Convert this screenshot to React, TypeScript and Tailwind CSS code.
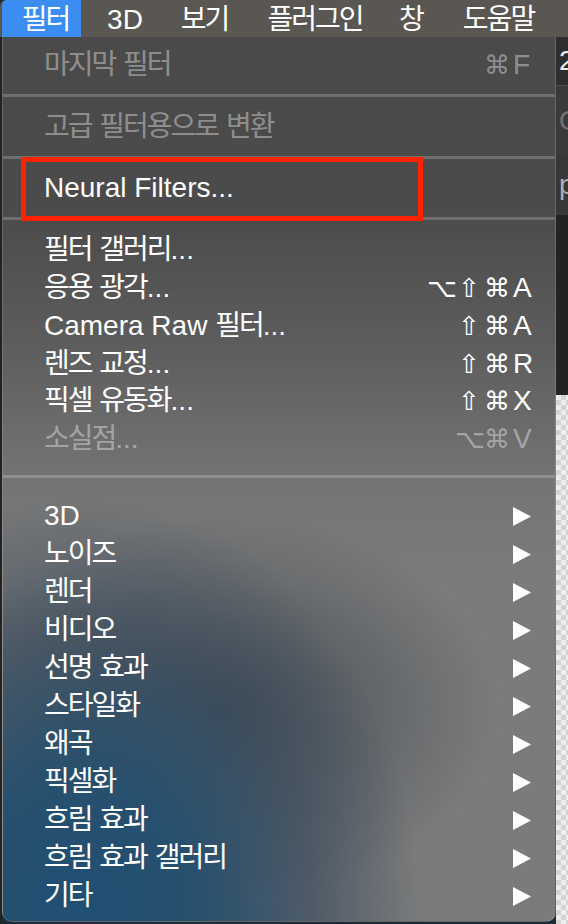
import React from "react";

type Item = {
  label: string;
  mods?: string[];
  keyChar?: string;
  disabled?: boolean;
  submenu?: boolean;
  marked?: boolean;
};

const FONT = "font-['Liberation_Sans','Noto_Sans_CJK_KR',sans-serif]";

const topItems: Item[] = [{ label: "마지막 필터", mods: ["⌘"], keyChar: "F", disabled: true }];
const convertItems: Item[] = [{ label: "고급 필터용으로 변환", disabled: true }];
const neuralItems: Item[] = [{ label: "Neural Filters...", marked: true }];
const filterItems: Item[] = [
  { label: "필터 갤러리..." },
  { label: "응용 광각...", mods: ["⌥", "⇧", "⌘"], keyChar: "A" },
  { label: "Camera Raw 필터...", mods: ["⇧", "⌘"], keyChar: "A" },
  { label: "렌즈 교정...", mods: ["⇧", "⌘"], keyChar: "R" },
  { label: "픽셀 유동화...", mods: ["⇧", "⌘"], keyChar: "X" },
  { label: "소실점...", mods: ["⌥", "⌘"], keyChar: "V", disabled: true },
];
const subItems: Item[] = [
  "3D",
  "노이즈",
  "렌더",
  "비디오",
  "선명 효과",
  "스타일화",
  "왜곡",
  "픽셀화",
  "흐림 효과",
  "흐림 효과 갤러리",
  "기타",
].map((label) => ({ label, submenu: true }));

const menuBar = [
  { label: "필터", w: "w-[79px]", active: true },
  { label: "3D", w: "w-[88px]" },
  { label: "보기", w: "w-[71px]" },
  { label: "플러그인", w: "w-[150px]" },
  { label: "창", w: "w-[42px]" },
  { label: "도움말", w: "w-[133px]" },
];

// Noto's hangul is a bit wider than the mac system font, tighten only those runs
const Label = ({ text }: { text: string }) => (
  <>
    {text.split(/([\uAC00-\uD7A3]+)/).map((part, i) =>
      /[\uAC00-\uD7A3]/.test(part) ? (
        <span key={i} className="tracking-[-2px]">
          {part}
        </span>
      ) : (
        <span key={i}>{part}</span>
      )
    )}
  </>
);

const SubArrow = () => (
  <svg width="18" height="19" viewBox="0 0 18 19" className="block">
    <path d="M0 0 L18 9.5 L0 19 Z" fill="currentColor" />
  </svg>
);

const Row = ({ item, tall }: { item: Item; tall?: boolean }) => (
  <div
    className={`relative flex items-center pl-[41px] pr-[22px] pt-[4px] ${tall ? "h-[38px]" : "h-[37.8px]"} ${
      item.disabled ? "text-white/40" : "text-white"
    }`}
  >
    <span className="flex-1 whitespace-nowrap text-[28px] leading-none">
      <Label text={item.label} />
    </span>
    {item.keyChar && (
      <div className="flex items-center">
        {item.mods?.map((m, i) => (
          <span
            key={i}
            className="w-[28px] text-center font-['DejaVu_Sans',sans-serif] text-[26px] leading-none"
          >
            {m}
          </span>
        ))}
        <span className="ml-[2px] w-[20px] text-[28px] leading-none">{item.keyChar}</span>
      </div>
    )}
    {item.submenu && (
      <span className="mr-[2px]">
        <SubArrow />
      </span>
    )}
    {item.marked && (
      <div className="pointer-events-none absolute left-[18px] top-[-11px] h-[64px] w-[402px] border-[5px] border-[#ff2200]" />
    )}
  </div>
);

const Separator = ({ big }: { big?: boolean }) => (
  <div className={big ? "pt-[19px] pb-[17px]" : "pt-[12px] pb-[9px]"}>
    <div className="h-[3px] bg-white/20" />
  </div>
);

export default function App() {
  return (
    <div className={`${FONT} flex h-[924px] w-[568px] flex-col overflow-hidden bg-[#1d2a38]`}>
      {/* menu bar */}
      <div className="flex h-[37px] shrink-0 items-center rounded-tl-[6px] bg-[#5a5752] pl-[2px]">
        {menuBar.map((m) => (
          <div
            key={m.label}
            className={`flex h-full shrink-0 items-center justify-center pt-[2px] text-[28px] leading-none text-white ${m.w} ${
              m.active ? "rounded-tl-[5px] bg-[#3b8df2] pl-[8px]" : ""
            }`}
          >
            <Label text={m.label} />
          </div>
        ))}
      </div>

      <div className="flex flex-1">
        <div className="w-[2px] shrink-0 bg-[#232323]" />

        {/* dropdown panel */}
        <div className="relative flex h-[885px] w-[554px] shrink-0 flex-col rounded-b-[10px] border-x border-b border-white/15 bg-[radial-gradient(ellipse_62%_48%_at_14%_100%,#1f4f73_0%,#28506e_35%,rgba(55,74,92,0.65)_68%,rgba(80,90,100,0)_100%),radial-gradient(ellipse_50%_22%_at_40%_76%,rgba(52,62,72,0.75)_0%,rgba(60,70,80,0)_100%),linear-gradient(to_bottom,#4a4a4a_0%,#4b4b4b_20%,#5d5d5d_35%,#747474_50%,#7b7b7b_62%,#7b7b7b_100%)] pt-[7px]">
          {topItems.map((it) => (
            <Row key={it.label} item={it} />
          ))}
          <Separator />
          {convertItems.map((it) => (
            <Row key={it.label} item={it} />
          ))}
          <Separator />
          {neuralItems.map((it) => (
            <Row key={it.label} item={it} />
          ))}
          <Separator />
          {filterItems.map((it) => (
            <Row key={it.label} item={it} />
          ))}
          <Separator big />
          {subItems.map((it) => (
            <Row key={it.label} item={it} tall />
          ))}
        </div>

        {/* app content peeking out on the right */}
        <div className="flex flex-1 flex-col overflow-hidden text-[28px] leading-none">
          <div className="flex h-[48px] items-center bg-[#2e2e2e] pl-[3px] text-white/90">2</div>
          <div className="flex h-[70px] items-center border-t border-white/10 bg-[#3a3a3a] pl-[3px] text-white/30">O</div>
          <div className="flex h-[60px] items-center bg-[#383838] pl-[3px] text-white/60">p</div>
          <div className="h-[180px] bg-[#232323]" />
          <div className="flex-1 bg-[repeating-conic-gradient(#d4d4d4_0%_25%,#ececec_0%_50%)] bg-[length:10px_10px]" />
        </div>
      </div>
    </div>
  );
}
